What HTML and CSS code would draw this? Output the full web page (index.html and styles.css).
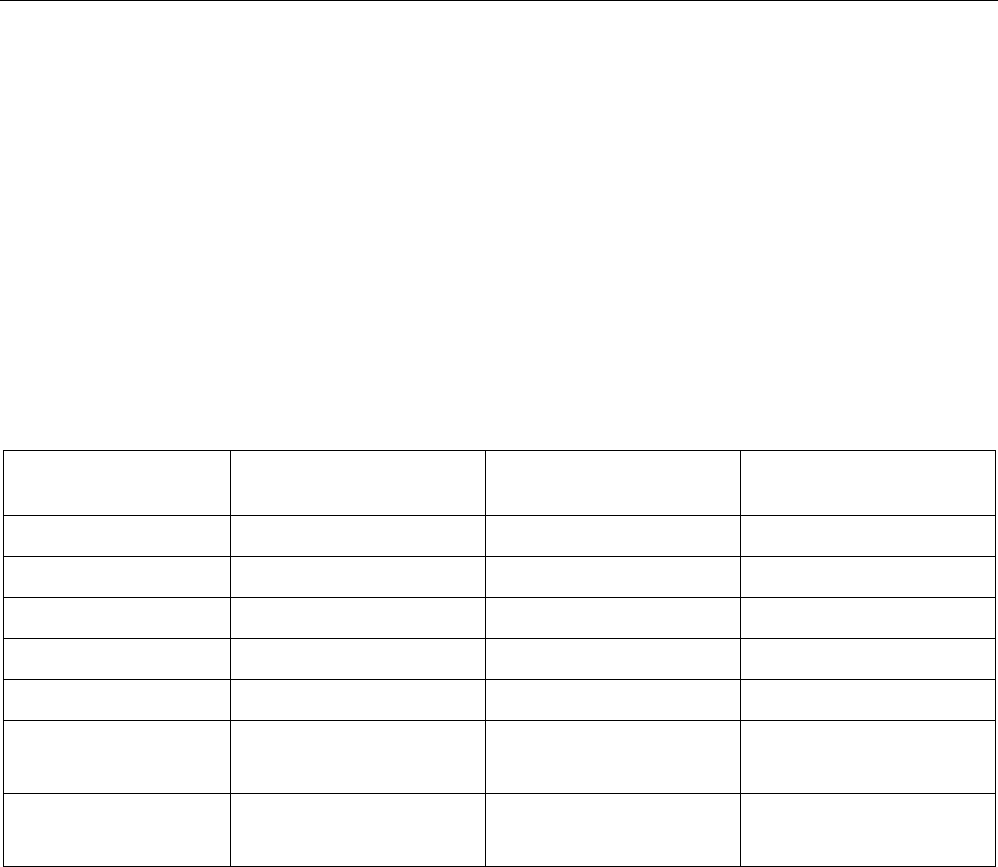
FILE: index.html
```html
<!DOCTYPE html>
<html>
<head>
<meta charset="utf-8">
<link rel="stylesheet" href="styles.css">
</head>
<body>
<div class="rule"></div>
<div class="content">
<table class="grid">
<colgroup><col class="c1"><col class="c2"><col class="c2"><col class="c2"></colgroup>
<tr class="head"><td></td><td></td><td></td><td></td></tr>
<tr class="row"><td></td><td></td><td></td><td></td></tr>
<tr class="row"><td></td><td></td><td></td><td></td></tr>
<tr class="row"><td></td><td></td><td></td><td></td></tr>
<tr class="row"><td></td><td></td><td></td><td></td></tr>
<tr class="row"><td></td><td></td><td></td><td></td></tr>
<tr class="tall"><td></td><td></td><td></td><td></td></tr>
<tr class="tall"><td></td><td></td><td></td><td></td></tr>
</table>
</div>
</body>
</html>
```
FILE: styles.css
```css
html, body {
  margin: 0;
  padding: 0;
  background: #fff;
  font-family: "Liberation Serif", serif;
}
.rule {
  height: 0;
  border-top: 1px solid #000;
}
.content {
  padding: 449px 0 0 3px;
}
.grid {
  border-collapse: collapse;
  table-layout: fixed;
  width: 993px;
}
.grid td {
  border: 1px solid #000;
  padding: 0;
}
.c1 { width: 227px; }
.c2 { width: 255px; }
.head td { height: 64px; }
.row td { height: 40px; }
.tall td { height: 72px; }
```
